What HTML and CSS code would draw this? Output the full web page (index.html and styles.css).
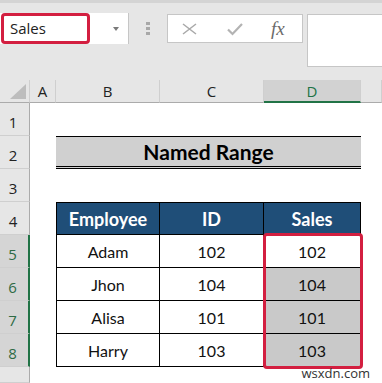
FILE: index.html
```html
<!DOCTYPE html>
<html lang="en">
<head>
    <meta charset="UTF-8">
    <meta name="viewport" content="width=device-width, initial-scale=1.0">
    <title>Named Range</title>
    <link rel="stylesheet" href="styles.css">
</head>
<body>
    <div class="edge"></div>
    <div class="fbar">
        <div class="namebox">
            <span class="name">Sales</span>
            <span class="arrow"></span>
        </div>
        <div class="grip"><i></i><i></i><i></i></div>
        <div class="fbtns">
            <svg class="ico-x" width="15" height="12" viewBox="0 0 15 12"><path d="M1 1 L14 11 M14 1 L1 11" stroke="#a9a9a9" stroke-width="1.5" fill="none"/></svg>
            <svg class="ico-ok" width="16" height="14" viewBox="0 0 16 14"><path d="M1 7.5 L5.5 12 L15 2" stroke="#b3b3b3" stroke-width="2.2" fill="none"/></svg>
            <span class="fx">fx</span>
        </div>
        <div class="finput"></div>
    </div>

    <div class="sheet">
        <!-- column headers -->
        <div class="ch corner"><svg width="16" height="15" viewBox="0 0 16 15"><path d="M16 0 L16 15 L0 15 Z" fill="#bdbdbd"/></svg></div>
        <div class="ch">A</div>
        <div class="ch">B</div>
        <div class="ch">C</div>
        <div class="ch on">D</div>
        <div class="ch"></div>

        <!-- row 1 -->
        <div class="rh">1</div><div></div><div></div><div></div><div></div><div></div>

        <!-- row 2 -->
        <div class="rh">2</div><div></div>
        <div class="title">Named Range</div>
        <div></div>

        <!-- row 3 -->
        <div class="rh">3</div><div></div><div></div><div></div><div></div><div></div>

        <!-- row 4 -->
        <div class="rh">4</div><div></div>
        <div class="t hd first">Employee</div>
        <div class="t hd">ID</div>
        <div class="t hd">Sales</div>
        <div></div>

        <!-- row 5 -->
        <div class="rh on">5</div><div></div>
        <div class="t first">Adam</div>
        <div class="t">102</div>
        <div class="t">102</div>
        <div></div>

        <!-- row 6 -->
        <div class="rh on">6</div><div></div>
        <div class="t first">Jhon</div>
        <div class="t">104</div>
        <div class="t gray">104</div>
        <div></div>

        <!-- row 7 -->
        <div class="rh on">7</div><div></div>
        <div class="t first">Alisa</div>
        <div class="t">101</div>
        <div class="t gray">101</div>
        <div></div>

        <!-- row 8 -->
        <div class="rh on">8</div><div></div>
        <div class="t first">Harry</div>
        <div class="t">103</div>
        <div class="t gray">103</div>
        <div></div>

        <!-- row 9 -->
        <div class="rh"></div><div></div><div></div><div></div><div></div><div></div>

        <div class="sel"></div>
        <span class="mark">wsxdn.com</span>
    </div>
</body>
</html>
```

FILE: styles.css
```css
*{
    margin: 0px;
    padding: 0px;
    box-sizing: border-box;
}
body{
    width: 382px;
    height: 383px;
    overflow: hidden;
    background-color: #e6e6e6;
    font-family: "Open Sans", sans-serif;
    color: #222;
}
.edge{
    height: 3px;
    background-color: #d4d4d4;
}

/* formula bar */
.fbar{
    height: 77px;
    display: flex;
    align-items: flex-start;
    padding-top: 10px;
}
.namebox{
    width: 129px;
    height: 31px;
    background-color: #fff;
    border-right: 1px solid #c6c6c6;
    display: flex;
    align-items: center;
}
.name{
    width: 89px;
    height: 31px;
    margin-left: 1px;
    border: 3px solid #d31f40;
    border-radius: 4px;
    padding-left: 6px;
    font-size: 15px;
    line-height: 25px;
    color: #222;
}
.arrow{
    margin-left: 23px;
    width: 0;
    height: 0;
    border-left: 3px solid transparent;
    border-right: 3px solid transparent;
    border-top: 4px solid #7a7a7a;
}
.grip{
    margin-left: 17px;
    margin-top: 9px;
    display: flex;
    flex-direction: column;
    gap: 2px;
}
.grip i{
    display: block;
    width: 4px;
    height: 3px;
    background-color: #a8a8a8;
}
.fbtns{
    margin-left: 17px;
    margin-top: 1px;
    width: 136px;
    height: 29px;
    background-color: #fff;
    border: 1px solid #c6c6c6;
    display: flex;
    align-items: center;
    padding-left: 14px;
}
.ico-ok{
    margin-left: 30px;
}
.fx{
    margin-left: 28px;
    font-family: "Liberation Serif", serif;
    font-style: italic;
    font-size: 19px;
    color: #6a6a6a;
    line-height: 20px;
}
.finput{
    margin-left: 4px;
    margin-top: 1px;
    flex: 1;
    height: 53px;
    background-color: #fff;
    border: 1px solid #c6c6c6;
    border-right: none;
}

/* sheet */
.sheet{
    position: relative;
    height: 303px;
    background-color: #fff;
    display: grid;
    grid-template-columns: 30px 26px 104px 104px 97px 1fr;
    grid-template-rows: 23px repeat(8, 33px) 1fr;
}
.ch{
    background-color: #e6e6e6;
    border-right: 1px solid #cfcfcf;
    border-bottom: 1px solid #ababab;
    display: flex;
    align-items: flex-end;
    justify-content: center;
    font-size: 15px;
    line-height: 20px;
    padding-bottom: 1px;
}
.ch.on{
    background-color: #d2d2d2;
    color: #217346;
    border-bottom: 2px solid #217346;
    padding-bottom: 0px;
}
.corner{
    justify-content: flex-end;
    padding: 0 3px 3px 0;
}
.rh{
    background-color: #e6e6e6;
    border-right: 1px solid #ababab;
    border-bottom: 1px solid #cfcfcf;
    display: flex;
    align-items: flex-end;
    justify-content: center;
    font-size: 15px;
    line-height: 20px;
    padding: 0 3px 3px 0;
}
.rh.on{
    background-color: #d5d5d5;
    color: #2e6b45;
    border-right: 2px solid #217346;
}
.title{
    grid-column: 3 / 6;
    background-color: #d0d0d0;
    border-top: 1px solid #000;
    border-bottom: 3px double #000;
    display: flex;
    align-items: center;
    justify-content: center;
    font-family: Lato, sans-serif;
    font-weight: 700;
    font-size: 21px;
    color: #000;
}
.t{
    display: flex;
    align-items: center;
    justify-content: center;
    font-family: Lato, sans-serif;
    font-size: 16px;
    color: #111;
    border-right: 1px solid #000;
    border-bottom: 1px solid #000;
}
.t.first{
    border-left: 1px solid #000;
}
.t.hd{
    background-color: #1f4e78;
    color: #fff;
    font-weight: 700;
    font-size: 18px;
    border-top: 1px solid #000;
}
.t.gray{
    background-color: #c9c9c9;
}
.sel{
    position: absolute;
    left: 263px;
    top: 153px;
    width: 100px;
    height: 136px;
    border: 3px solid #d31f40;
    border-radius: 4px;
}
.mark{
    position: absolute;
    right: 12px;
    bottom: 1px;
    font-size: 13px;
    color: #333;
}
```
